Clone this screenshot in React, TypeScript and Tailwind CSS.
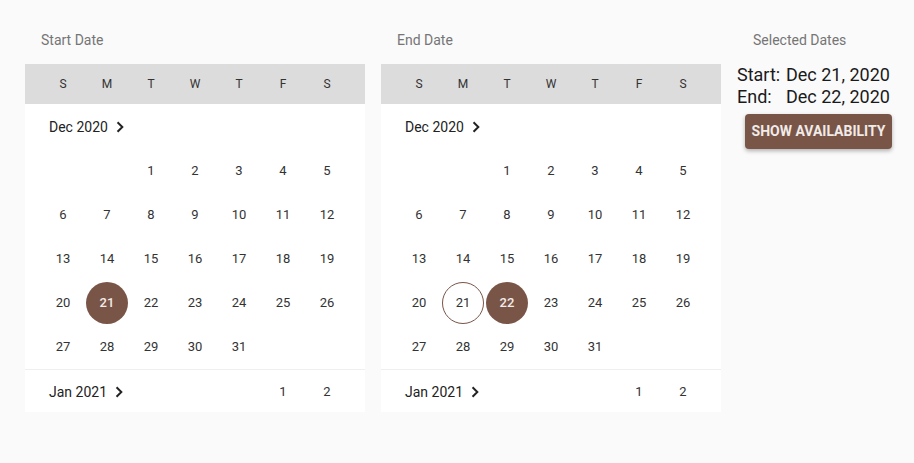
import React from "react";

const WEEK = ["S", "M", "T", "W", "T", "F", "S"];

function Chevron() {
  return (
    <svg width="14" height="14" viewBox="0 0 24 24" className="ml-[5px]">
      <polyline points="9 5 16 12 9 19" fill="none" stroke="#222" strokeWidth="3.4" strokeLinecap="square" strokeLinejoin="miter" />
    </svg>
  );
}

type Mark = { filled?: number[]; outlined?: number[] };

function Calendar({ title, mark }: { title: string; mark: Mark }) {
  const cells: (number | null)[] = [null, null];
  for (let d = 1; d <= 31; d++) cells.push(d);
  const rows: (number | null)[][] = [];
  for (let i = 0; i < cells.length; i += 7) rows.push(cells.slice(i, i + 7));
  while (rows[rows.length - 1].length < 7) rows[rows.length - 1].push(null);

  const Day = ({ d }: { d: number | null }) => {
    if (d === null) return <div className="h-11" />;
    const filled = mark.filled?.includes(d);
    const outlined = mark.outlined?.includes(d);
    return (
      <div className="h-11 flex items-center justify-center">
        {filled ? (
          <div className="w-[42px] h-[42px] rounded-full bg-[#795548] text-[#f3ece9] font-medium flex items-center justify-center">
            {d}
          </div>
        ) : outlined ? (
          <div className="w-[42px] h-[42px] rounded-full border border-[#795548] flex items-center justify-center">
            {d}
          </div>
        ) : (
          d
        )}
      </div>
    );
  };

  return (
    <div className="flex flex-col w-[340px]">
      <div className="pt-[30px] h-[64px] pl-4 text-[14px] leading-5 text-[#757575]">{title}</div>
      <div className="bg-white">
        <div className="h-10 bg-[#dcdcdc] grid grid-cols-7 px-4 items-center text-[12px] text-[#333]">
          {WEEK.map((w, i) => (
            <div key={i} className="text-center">{w}</div>
          ))}
        </div>
        <div className="h-[45px] pt-[1px] flex items-center pl-6 text-[14px] text-[#222]">
          Dec 2020
          <Chevron />
        </div>
        <div className="px-4 text-[13px] text-[#333]">
          {rows.map((r, ri) => (
            <div key={ri} className="grid grid-cols-7">
              {r.map((d, ci) => (
                <Day key={ci} d={d} />
              ))}
            </div>
          ))}
        </div>
        <div className="border-t border-[#efefef] px-4 grid grid-cols-7 h-[43px] pt-[2px] items-center text-[13px] text-[#333]">
          <div className="col-span-5 pl-2 flex items-center text-[14px] text-[#222]">
            Jan 2021
            <Chevron />
          </div>
          <div className="text-center">1</div>
          <div className="text-center">2</div>
        </div>
      </div>
    </div>
  );
}

export default function App() {
  return (
    <div className="min-h-[463px] w-full bg-[#fafafa] font-['Roboto',sans-serif]">
      <div className="flex pl-[25px] gap-4">
        <Calendar title="Start Date" mark={{ filled: [21] }} />
        <Calendar title="End Date" mark={{ filled: [22], outlined: [21] }} />
        <div className="flex flex-col">
          <div className="pt-[30px] h-[64px] pl-4 text-[14px] leading-5 text-[#757575]">Selected Dates</div>
          <div className="grid grid-cols-[49px_auto] text-[18px] leading-[22px] text-[#1a1a1a]">
            <div>Start:</div>
            <div>Dec 21, 2020</div>
            <div>End:</div>
            <div>Dec 22, 2020</div>
          </div>
          <button className="mt-[6px] ml-2 w-[147px] h-[35px] rounded-[4px] bg-[#795548] text-[#f1ebe8] text-[14px] font-bold uppercase shadow-[0_2px_4px_rgba(0,0,0,0.3)]">
            Show Availability
          </button>
        </div>
      </div>
    </div>
  );
}
